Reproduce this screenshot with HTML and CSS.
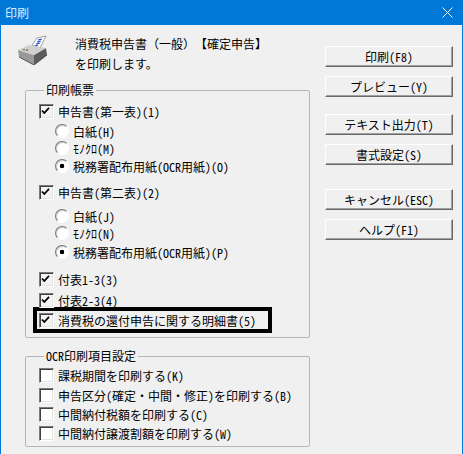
FILE: index.html
```html
<!DOCTYPE html>
<html lang="ja">

<head>
  <meta charset="UTF-8">
  <title>印刷</title>
  <link rel="stylesheet" href="styles.css">
</head>

<body>
  <div class="window">
    <div class="title-bar">
      <span class="title">印刷</span>
      <svg class="close" width="11" height="11" viewBox="0 0 11 11">
        <path d="M0.5 0.5L10.5 10.5M10.5 0.5L0.5 10.5" stroke="#fff" stroke-width="1" fill="none" />
      </svg>
    </div>
    <div class="content">
      <div class="left">
        <div class="intro">
          <svg class="printer" width="32" height="30" viewBox="0 0 32 30">
            <path d="M15 10L20 3L29 1L23 13Z" fill="#fff" stroke="#777" stroke-width="0.7" />
            <path d="M21 5l4-1M20 7l4-1M19 9l4-1M18 11l3-1" stroke="#1c3fd0" stroke-width="1.2" />
            <path d="M1 15L17 20L17 30L2 22Z" fill="#9a9a9a" />
            <path d="M17 20L29 13L30 20L17 30Z" fill="#5c5c5c" />
            <path d="M1 15L12 10L29 13L17 20Z" fill="#cfcfcf" />
            <path d="M2 22L17 30L30 20" stroke="#3a3a3a" stroke-width="0.8" fill="none" />
            <path d="M6 14h2v1.2h-2z" fill="#25a83a" />
            <path d="M9 14.5h2v1.2h-2z" fill="#e02020" />
          </svg>
          <p class="intro-text">消費税申告書（一般）【確定申告】<br>を印刷します。</p>
        </div>

        <fieldset class="group group-forms">
          <legend>印刷帳票</legend>
          <label class="check checked">申告書(第一表)(1)</label>
          <div class="radios">
            <label class="radio">白紙(H)</label>
            <label class="radio">ﾓﾉｸﾛ(M)</label>
            <label class="radio selected">税務署配布用紙(OCR用紙)(O)</label>
          </div>
          <label class="check checked second">申告書(第二表)(2)</label>
          <div class="radios radios-second">
            <label class="radio">白紙(J)</label>
            <label class="radio">ﾓﾉｸﾛ(N)</label>
            <label class="radio selected">税務署配布用紙(OCR用紙)(P)</label>
          </div>
          <label class="check checked third">付表1-3(3)</label>
          <label class="check checked fourth">付表2-3(4)</label>
          <div class="highlight">
            <label class="check checked">消費税の還付申告に関する明細書(5)</label>
          </div>
        </fieldset>

        <fieldset class="group group-ocr">
          <legend>OCR印刷項目設定</legend>
          <label class="check">課税期間を印刷する(K)</label>
          <label class="check ocr-second">申告区分(確定・中間・修正)を印刷する(B)</label>
          <label class="check">中間納付税額を印刷する(C)</label>
          <label class="check">中間納付譲渡割額を印刷する(W)</label>
        </fieldset>
      </div>

      <div class="buttons">
        <button class="btn">印刷(F8)</button>
        <button class="btn">プレビュー(Y)</button>
        <button class="btn gap-text">テキスト出力(T)</button>
        <button class="btn">書式設定(S)</button>
        <button class="btn gap-cancel">キャンセル(ESC)</button>
        <button class="btn">ヘルプ(F1)</button>
      </div>
    </div>
  </div>
</body>

</html>
```

FILE: styles.css
```css
* {
  box-sizing: border-box;
}

html,
body {
  margin: 0;
  height: 100%;
}

body {
  font-family: "Noto Sans CJK JP", "Liberation Sans", sans-serif;
  font-size: 12px;
  font-feature-settings: "hwid";
  text-spacing-trim: space-all;
  color: #000;
  background-color: #f0f0f0;
}

.window {
  height: 454px;
  border-left: 1px solid #0078d7;
  border-right: 1px solid #0078d7;
  background-color: #f0f0f0;
}

.title-bar {
  display: flex;
  align-items: center;
  justify-content: space-between;
  height: 25px;
  padding: 0 9px 0 4px;
  background-color: #0078d7;
  color: #dfeefa;
}

.content {
  display: flex;
  padding: 9px 0 0 24px;
}

.left {
  width: 285px;
}

.intro {
  display: flex;
  height: 49px;
}

.printer {
  flex: none;
  margin-top: 1px;
  margin-left: -8px;
}

.intro-text {
  margin: 0 0 0 26px;
  line-height: 20px;
  white-space: nowrap;
  font-feature-settings: normal;
}

.group {
  margin: 0;
  padding: 0 0 0 13px;
  border: 1px solid #b5b5b5;
  border-radius: 2px;
}

.group legend {
  padding: 0 2px;
  margin-left: 5px;
  line-height: 14px;
}

.group-forms {
  height: 255px;
  padding-top: 5px;
}

.group-ocr {
  height: 98px;
  margin-top: 11px;
  padding-top: 3px;
}

.group-ocr .check + .check {
  margin-top: 1px;
}

.group-ocr .check.ocr-second {
  margin-top: 2px;
}

.check,
.radio {
  display: flex;
  align-items: center;
  height: 18px;
  white-space: nowrap;
}

.check::before {
  content: "";
  flex: none;
  width: 13px;
  height: 13px;
  margin-right: 4px;
  border: 1px solid;
  border-color: #7a7a7a #fff #fff #7a7a7a;
  box-shadow: inset 1px 1px 0 #404040, inset -1px -1px 0 #e3e3e3;
  background-color: #fff;
}

.check.checked::before {
  background-color: #f4f4f4;
  background-image: url("data:image/svg+xml,%3Csvg xmlns='http://www.w3.org/2000/svg' width='11' height='11'%3E%3Cpath d='M2 5.5L4.3 8L9 2.8' stroke='%23000' stroke-width='1.8' fill='none'/%3E%3C/svg%3E");
}

.radios {
  margin-top: 2px;
  padding-left: 16px;
}

.radio {
  margin-bottom: -1px;
}

.radio.selected {
  margin-top: 1px;
}

.radio::before {
  content: "";
  flex: none;
  width: 12px;
  height: 12px;
  margin-right: 4px;
  border: 1px solid;
  border-color: #777 #fff #fff #777;
  border-radius: 50%;
  box-shadow: inset 1px 1px 0 #d0d0d0;
  background-color: #fff;
}

.radio.selected::before {
  background: radial-gradient(circle, #000 0 2px, #fff 2.6px);
}

.check.second {
  margin-top: 9px;
}

.radios-second {
  margin-top: 6px;
}

.radios-second .radio.selected {
  margin-top: 2px;
}

.check.third {
  margin-top: 10px;
}

.check.fourth {
  margin-top: 3px;
}

.highlight {
  width: 239px;
  height: 26px;
  margin-top: -2px;
  margin-left: -6px;
  padding-left: 2px;
  border: 4px solid #000;
}

.buttons {
  display: flex;
  flex-direction: column;
  gap: 9px;
  width: 128px;
  margin-left: 15px;
  padding-top: 12px;
}

.btn {
  height: 21px;
  padding: 0;
  font: inherit;
  font-feature-settings: inherit;
  color: #000;
  background-color: #f0f0f0;
  border: 1px solid;
  border-color: #fff #696969 #696969 #fff;
  box-shadow: inset -1px -1px 0 #a0a0a0;
}

.btn.gap-text {
  margin-top: 8px;
}

.btn.gap-cancel {
  margin-top: 15px;
}
```
